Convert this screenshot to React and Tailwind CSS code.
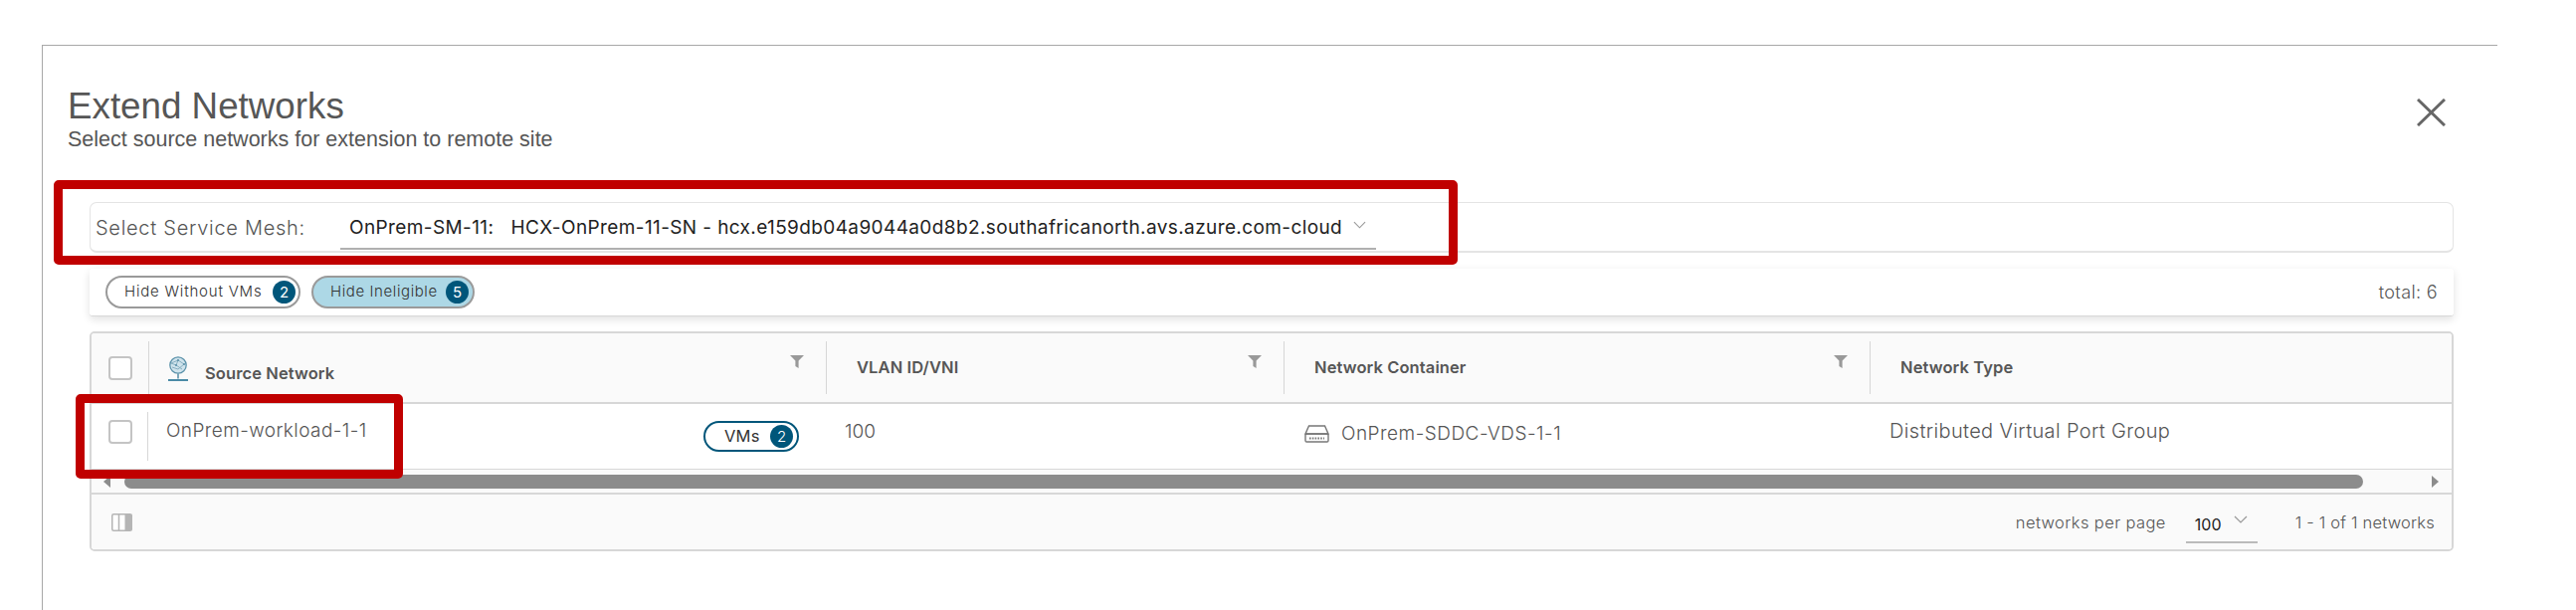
const inter = "font-['Inter',sans-serif]";

function Chevron({ className }) {
  return (
    <svg viewBox="0 0 14 8" className={className} fill="none" stroke="#999" strokeWidth="1.2">
      <path d="M1 1l6 6 6-6" />
    </svg>
  );
}

function Filter({ className }) {
  return (
    <svg viewBox="0 0 14 13" className={`w-[14px] h-[13px] ${className || ""}`} fill="#999">
      <path d="M0 0h14L8.6 5.5V13L5.4 11V5.5z" />
    </svg>
  );
}

function Checkbox() {
  return <div className="w-[24px] h-[24px] rounded-[4px] border-2 border-[#c4c4c4] bg-white" />;
}

function Badge({ n }) {
  return (
    <span className={`w-[23px] h-[23px] rounded-full bg-[#00567a] text-white text-[15px] leading-[23px] text-center ${inter}`}>
      {n}
    </span>
  );
}

function Globe() {
  return (
    <svg viewBox="0 0 20 26" className="w-[20px] h-[26px]" fill="none">
      <circle cx="10" cy="9" r="8.2" fill="#cfe3ec" stroke="#5d93ab" strokeWidth="1.3" />
      <path d="M3 7l7-3 6 4-6 5-6-2M10 4l-2 5 6 4M8 9l-5-2" stroke="#7fa9bc" strokeWidth="0.9" />
      <circle cx="10" cy="4" r="1.1" fill="#5d93ab" />
      <circle cx="16" cy="8" r="1.1" fill="#5d93ab" />
      <circle cx="8" cy="9" r="1.1" fill="#5d93ab" />
      <path d="M10 17.5v5" stroke="#5d93ab" strokeWidth="1.6" />
      <path d="M0 24h20" stroke="#4a8aa6" strokeWidth="2.2" />
    </svg>
  );
}

function SwitchIcon() {
  return (
    <svg viewBox="0 0 25 18" className="w-[25px] h-[18px]" fill="none" stroke="#777" strokeWidth="1.4">
      <path d="M4.5 1h16l3.5 8H1z" />
      <rect x="1" y="9" width="23" height="8" rx="1.2" />
      <path d="M5 13.5h15" strokeDasharray="1.6 1.2" strokeWidth="2" />
    </svg>
  );
}

function HeadCell({ width, label, filter, grow }) {
  return (
    <div className={`flex items-center border-l border-[#d7d7d7] ${grow ? "flex-1" : ""}`} style={grow ? undefined : { width }}>
      <span className="ml-[30px] font-semibold text-[16.5px] tracking-[0.1px] text-[#565656]">{label}</span>
      {filter && <Filter className="ml-auto mr-[22px] -mt-[12px]" />}
    </div>
  );
}

export default function App() {
  return (
    <div className="w-[2589px] h-[613px] overflow-hidden bg-white">
      <div className="relative ml-[42px] mt-[45px] w-[2468px] h-[568px] border-l border-t border-[#a8a8a8]">
        <div className="flex justify-between items-start pl-[25px] pr-[52px] pt-[41px]">
          <div className="font-['Liberation_Sans',sans-serif]">
            <div className="text-[36.75px] leading-[40px] text-[#565656]">Extend Networks</div>
            <div className="text-[21.5px] leading-[26px] text-[#565656]">Select source networks for extension to remote site</div>
          </div>
          <svg viewBox="0 0 29 28" className="w-[29px] h-[28px] mt-[12px]" fill="none" stroke="#666" strokeWidth="3">
            <path d="M1 1l27 26M28 1L1 27" />
          </svg>
        </div>

        <div className="ml-[47px] w-[2376px]">
          <div className={`${inter} mt-[50px] h-[51px] flex items-center rounded-[7px] border border-[#e4e4e4] border-b-2 bg-white`}>
            <span className="ml-[5px] mt-[2px] w-[246px] font-light text-[20px] tracking-[0.72px] text-[#555]">Select Service Mesh:</span>
            <div className="relative flex items-center w-[1041px] h-[44px] mt-[1px] border-b-2 border-[#b0b0b0] text-[19px] tracking-[0.39px] text-[#222]">
              <span className="ml-[9px] mt-[4px] whitespace-pre">OnPrem-SM-11:   HCX-OnPrem-11-SN - hcx.e159db04a9044a0d8b2.southafricanorth.avs.azure.com-cloud</span>
              <Chevron className="w-[13px] h-[8px] absolute left-[1018px] top-[15px]" />
            </div>
          </div>

          <div className={`${inter} mt-[16px] h-[48px] flex items-center justify-between bg-white border-b border-[#d8d8d8] rounded-[3px] shadow-[0_3px_8px_rgba(0,0,0,0.12)]`}>
            <div className="flex items-center ml-[16px] gap-[11px]">
              <div className="w-[196px] h-[33px] flex items-center justify-between rounded-full border-2 border-[#9a9a9a] bg-white pl-[17px] pr-[3px]">
                <span className="text-[15px] font-light tracking-[0.8px] text-[#333]">Hide Without VMs</span>
                <Badge n="2" />
              </div>
              <div className="w-[164px] h-[33px] flex items-center justify-between rounded-full border-2 border-[#9a9a9a] bg-[#add8e6] pl-[17px] pr-[4px]">
                <span className="text-[15px] font-light tracking-[0.6px] text-[#333]">Hide Ineligible</span>
                <Badge n="5" />
              </div>
            </div>
            <span className="mr-[16px] text-[18px] font-light tracking-[0.35px] text-[#555]">total: 6</span>
          </div>

          <div className={`${inter} mt-[15px] h-[221px] rounded-[5px] border-2 border-[#d7d7d7] overflow-hidden`}>
            <div className="h-[71px] flex bg-[#fafafa] border-b-2 border-[#d7d7d7] pt-[8px] pb-[8px]">
              <div className="w-[57px] flex items-center pl-[17px]"><Checkbox /></div>
              <div className="relative w-[681px] flex items-center border-l border-[#d7d7d7]">
                <div className="ml-[19px] mt-[3px] flex items-end gap-[17px]">
                  <Globe />
                  <span className="font-semibold text-[16.5px] tracking-[0.1px] text-[#565656] leading-[18px]">Source Network</span>
                </div>
                <Filter className="ml-auto mr-[22px] -mt-[12px]" />
              </div>
              <HeadCell width={460} label="VLAN ID/VNI" filter />
              <HeadCell width={589} label="Network Container" filter />
              <HeadCell grow label="Network Type" />
            </div>

            <div className="h-[66px] flex bg-white border-b border-[#d7d7d7] text-[19px] font-light text-[#555]">
              <div className="w-[56px] flex items-center pl-[17px] pb-[10px]"><Checkbox /></div>
              <div className="w-[682px] my-[8px] flex items-center justify-between border-l border-[#d7d7d7] pl-[18px] pr-[27px]">
                <span className="-mt-[10px] tracking-[0.42px]">OnPrem-workload-1-1</span>
                <div className="w-[96px] h-[31px] flex items-center justify-between rounded-full border-2 border-[#00567a] pl-[19px] pr-[4px] -mt-[1px]">
                  <span className="text-[16.5px] font-normal tracking-[0.2px] text-[#333]">VMs</span>
                  <Badge n="2" />
                </div>
              </div>
              <div className="w-[460px] flex items-center pl-[19px] pb-[9px]">100</div>
              <div className="w-[589px] flex items-center pl-[21px] pb-[5px] gap-[12px]">
                <SwitchIcon />
                <span className="tracking-[0.5px]">OnPrem-SDDC-VDS-1-1</span>
              </div>
              <div className="flex-1 flex items-center pl-[20px] pb-[11px] text-[20px] tracking-[0.35px]">Distributed Virtual Port Group</div>
            </div>

            <div className="h-[25px] flex items-center bg-[#fafafa] border-b-2 border-[#d7d7d7]">
              <svg viewBox="0 0 7 12" className="w-[7px] h-[12px] ml-[12px]" fill="#8c8c8c"><path d="M7 0v12L0 6z" /></svg>
              <div className="ml-[14px] w-[2250px] h-[14px] rounded-full bg-[#8c8c8c]" />
              <svg viewBox="0 0 7 12" className="w-[7px] h-[12px] ml-[69px]" fill="#8c8c8c"><path d="M0 0v12l7-6z" /></svg>
            </div>

            <div className="h-[57px] flex items-center justify-between bg-[#fafafa] pl-[20px] pr-[17px] text-[16px] font-light text-[#555]">
              <svg viewBox="0 0 21 18" className="w-[21px] h-[18px] -mt-[2px]">
                <rect x="0.75" y="0.75" width="19.5" height="16.5" rx="1.5" fill="#fff" stroke="#b5b5b5" strokeWidth="1.5" />
                <path d="M7.5 1v16" stroke="#b5b5b5" strokeWidth="1.5" />
                <rect x="13.5" y="1" width="7" height="16" fill="#b5b5b5" />
              </svg>
              <div className="flex items-center">
                <span className="text-[16.5px] tracking-[0.4px]">networks per page</span>
                <div className="relative ml-[20px] w-[72px] h-[34px] border-b-2 border-[#bbb] mt-[6px] pl-[9px] font-normal text-[#222] leading-[30px]">
                  100
                  <Chevron className="w-[14px] h-[8px] absolute left-[48px] top-[6px]" />
                </div>
                <span className="ml-[38px] tracking-[0.2px] text-[16.5px]">1 - 1 of 1 networks</span>
              </div>
            </div>
          </div>
        </div>

        <div className="absolute left-[11px] top-[135px] w-[1411px] h-[85px] rounded-[5px] border-[9px] border-[#c00000]" />
        <div className="absolute left-[33px] top-[350px] w-[329px] h-[85px] rounded-[5px] border-[9px] border-[#c00000]" />
      </div>
    </div>
  );
}
